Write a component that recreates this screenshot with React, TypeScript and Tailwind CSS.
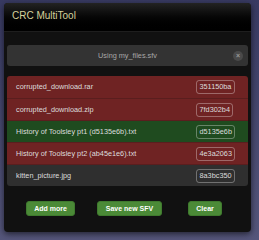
import React from "react";

const rows: { name: string; hash: string; bg: string }[] = [
  { name: "corrupted_download.rar", hash: "351150ba", bg: "bg-[#6f2323]" },
  { name: "corrupted_download.zip", hash: "7fd302b4", bg: "bg-[#6f2323]" },
  { name: "History of Toolsley pt1 (d5135e6b).txt", hash: "d5135e6b", bg: "bg-[#1f4b1f]" },
  { name: "History of Toolsley pt2 (ab45e1e6).txt", hash: "4e3a2063", bg: "bg-[#6f2323]" },
  { name: "kitten_picture.jpg", hash: "8a3bc350", bg: "bg-[#2f2f2f]" },
];

export default function App() {
  return (
    <div
      className="w-[259px] h-[240px] bg-gradient-to-b from-[#383a62] to-[#55567b] pt-[3px] pl-[4px]"
      style={{ fontFamily: '"Liberation Sans", Arial, sans-serif' }}
    >
      <div className="w-[247px] h-[229px] rounded-[4px] bg-[#111111] shadow-[0_2px_6px_rgba(0,0,0,0.6)] overflow-hidden flex flex-col">
        <div className="h-[29px] shrink-0 bg-gradient-to-b from-[#232323] to-[#000000] border-b border-[#1e1e1e] flex items-center pl-[8px] pb-[2px]">
          <span className="text-[10px] leading-none text-[#d6d29c]">CRC MultiTool</span>
        </div>
        <div className="px-[3px] pt-[13px] flex flex-col">
          <div className="relative h-[21px] rounded-[3px] bg-[#333333] flex items-center justify-center">
            <span className="text-[7.3px] leading-none text-[#a8a8a8]">Using my_files.sfv</span>
            <div className="absolute right-[5px] top-[5.5px] w-[10px] h-[10px] rounded-full bg-[#4a4a4a] flex items-center justify-center">
              <span className="text-[7px] leading-none text-[#9a9a9a] font-bold">×</span>
            </div>
          </div>
          <div className="mt-[10px] rounded-[3px] overflow-hidden flex flex-col">
            {rows.map((r, i) => (
              <div
                key={i}
                className={`${r.bg} h-[22px] grid grid-cols-[189px_1fr] items-center ${i > 0 ? "border-t border-[#5a1e1e]" : ""}`}
              >
                <span className="pl-[9px] text-[7.3px] leading-none text-[#dcdcdc] whitespace-nowrap">{r.name}</span>
                <div className="flex items-center">
                  <span className="flex items-center h-[14px] px-[2.5px] rounded-[3px] border border-[rgba(255,255,255,0.32)] text-[7.3px] leading-none text-[#dcdcdc]">
                    {r.hash}
                  </span>
                </div>
              </div>
            ))}
          </div>
          <div className="mt-[15px] flex items-center pl-[19px]">
            <button className="h-[15px] w-[49px] rounded-[3px] bg-[#4b8a37] border border-[#3f7a2e] text-[7px] font-bold text-white leading-none flex items-center justify-center">
              Add more
            </button>
            <button className="ml-[22px] h-[15px] w-[65px] rounded-[3px] bg-[#4b8a37] border border-[#3f7a2e] text-[7px] font-bold text-white leading-none flex items-center justify-center">
              Save new SFV
            </button>
            <button className="ml-[26px] h-[15px] w-[34px] rounded-[3px] bg-[#4b8a37] border border-[#3f7a2e] text-[7px] font-bold text-white leading-none flex items-center justify-center">
              Clear
            </button>
          </div>
        </div>
      </div>
    </div>
  );
}
